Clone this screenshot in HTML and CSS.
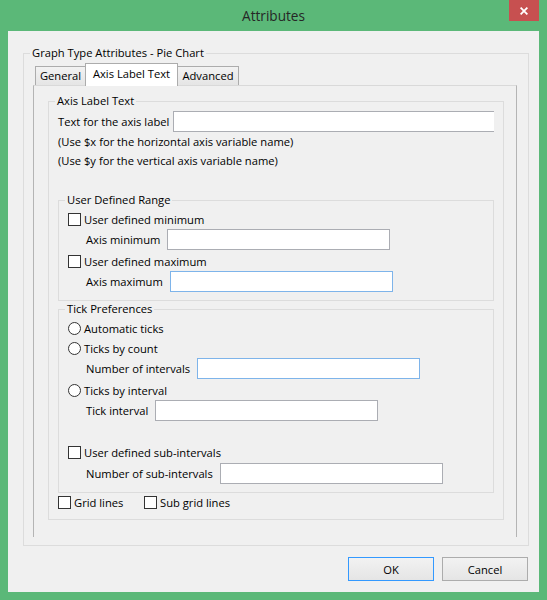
FILE: index.html
```html
<!DOCTYPE html>
<html lang="en">
<head>
<meta charset="utf-8">
<title>Attributes</title>
<link rel="stylesheet" href="styles.css">
</head>
<body>
<div class="window">
  <div class="titlebar">
    <span class="title">Attributes</span>
    <button class="close" type="button" aria-label="Close">
      <svg width="8" height="8" viewBox="0 0 8 8"><path d="M0.6 0.6 L7.4 7.4 M7.4 0.6 L0.6 7.4" stroke="#fff" stroke-width="1.8" fill="none"/></svg>
    </button>
  </div>
  <div class="client">
    <fieldset class="group outer">
      <legend>Graph Type Attributes - Pie Chart</legend>
      <div class="tabs">
        <div class="tab tab-general">General</div>
        <div class="tab tab-active">Axis Label Text</div>
        <div class="tab tab-advanced">Advanced</div>
      </div>
      <div class="panel">
        <fieldset class="group axis">
          <legend>Axis Label Text</legend>
          <div class="row r-input first">
            <span class="lbl">Text for the axis label</span><span class="input wide"></span>
          </div>
          <div class="row hint">(Use $x for the horizontal axis variable name)</div>
          <div class="row hint">(Use $y for the vertical axis variable name)</div>

          <fieldset class="group sub range">
            <legend>User Defined Range</legend>
            <div class="row r-chk"><span class="cb"></span>User defined minimum</div>
            <div class="row r-input indent"><span class="lbl">Axis minimum</span><span class="input std"></span></div>
            <div class="row r-chk"><span class="cb"></span>User defined maximum</div>
            <div class="row r-input indent"><span class="lbl">Axis maximum</span><span class="input std focus"></span></div>
          </fieldset>

          <fieldset class="group sub tick">
            <legend>Tick Preferences</legend>
            <div class="row r-chk"><span class="rb"></span>Automatic ticks</div>
            <div class="row r-chk tight"><span class="rb"></span>Ticks by count</div>
            <div class="row r-input indent"><span class="lbl">Number of intervals</span><span class="input std focus"></span></div>
            <div class="row r-chk"><span class="rb"></span>Ticks by interval</div>
            <div class="row r-input indent"><span class="lbl">Tick interval</span><span class="input std"></span></div>
            <div class="row r-chk spaced"><span class="cb"></span>User defined sub-intervals</div>
            <div class="row r-input indent after-chk"><span class="lbl">Number of sub-intervals</span><span class="input std"></span></div>
          </fieldset>

          <div class="row grid-row">
            <span class="gi gi-first"><span class="cb"></span>Grid lines</span>
            <span class="gi"><span class="cb"></span>Sub grid lines</span>
          </div>
        </fieldset>
      </div>
    </fieldset>
    <div class="buttons">
      <button class="btn default" type="button">OK</button>
      <button class="btn" type="button">Cancel</button>
    </div>
  </div>
</div>
</body>
</html>
```
FILE: styles.css
```css
* { box-sizing: border-box; }
html, body { margin: 0; padding: 0; }
body {
  font-family: "Open Sans", "Noto Sans", sans-serif;
  font-size: 11.2px;
  color: #000;
  background: #5bb878;
}
.window {
  width: 547px;
  height: 600px;
  background: #5bb878;
  display: flex;
  flex-direction: column;
}
.titlebar {
  height: 31px;
  flex: none;
  display: grid;
  grid-template-columns: 1fr auto 1fr;
}
.title {
  grid-column: 2;
  font-size: 13.6px;
  line-height: 31px;
  color: #262626;
}
.close {
  grid-column: 3;
  justify-self: end;
  align-self: start;
  width: 30px;
  height: 21px;
  margin-right: 8px;
  padding: 0;
  border: 0;
  background: #c75050;
  display: flex;
  align-items: center;
  justify-content: center;
}
.close svg { display: block; }
.client {
  flex: 1;
  margin: 0 8px 8px;
  background: #f0f0f0;
  padding: 14px 10px 0 15px;
  display: flex;
  flex-direction: column;
}
fieldset.group {
  margin: 0;
  min-inline-size: 0;
  border: 1px solid #dcdcdc;
}
fieldset.group > legend {
  padding: 0 2px;
  margin-left: -3px;
  line-height: 16px;
}
fieldset.outer { padding: 2px 11px 8px 9px; }
.tabs {
  display: flex;
  align-items: flex-end;
  height: 22px;
  padding-left: 2px;
}
.tab {
  height: 19px;
  border: 1px solid #acacac;
  border-bottom: 0;
  background: linear-gradient(#f2f2f2, #e5e5e5);
  text-align: center;
  line-height: 18px;
  white-space: nowrap;
}
.tab-general { width: 51px; }
.tab-active {
  width: 93px;
  height: 23px;
  margin-left: -1px;
  margin-bottom: -1px;
  background: #fff;
  line-height: 20px;
  position: relative;
  z-index: 1;
}
.tab-advanced { width: 62px; margin-left: -1px; }
.panel {
  border: 1px solid #b4b4b4;
  border-top-color: #d9d9d9;
  border-bottom: 0;
  padding: 7px 12px 17px 14px;
}
fieldset.axis { padding: 0 9px 8px 9px; }
.row {
  display: flex;
  align-items: center;
  white-space: nowrap;
}
.r-input { height: 21px; }
.r-input.first { margin-top: 2px; }
.r-chk { height: 20px; margin-top: 1px; }
.r-chk.tight { margin-top: 0; }
.r-chk.spaced { margin-top: 21px; }
.r-input.after-chk { margin-top: 1px; }
.hint { height: 19px; }
.indent { padding-left: 18px; }
.input {
  height: 21px;
  background: #fff;
  border: 1px solid #abadb3;
}
.input.wide { flex: 1; margin-left: 4px; border-right: 0; }
.input.std { width: 223px; margin-left: 7px; }
.input.focus { border-color: #7eb4ea; }
fieldset.sub { padding: 0 0 8px 9px; }
fieldset.range { margin-top: 22px; }
fieldset.tick { margin-top: 0; }
.cb {
  width: 13px;
  height: 13px;
  flex: none;
  border: 1px solid #333;
  background: #fff;
  margin-right: 3px;
}
.rb {
  width: 13px;
  height: 13px;
  flex: none;
  border: 1px solid #333;
  border-radius: 50%;
  background: #fff;
  margin-right: 3px;
}
.grid-row { height: 18px; }
.gi { display: flex; align-items: center; }
.gi-first { width: 86px; }
.buttons {
  display: flex;
  justify-content: flex-end;
  gap: 8px;
  margin-top: 11px;
  margin-right: 1px;
}
.btn {
  width: 86px;
  height: 24px;
  padding: 0;
  border: 1px solid #acacac;
  background: linear-gradient(#f2f2f2, #e5e5e5);
  font-family: inherit;
  font-size: 11.2px;
  color: #000;
}
.btn.default { border-color: #3399ff; }
```
